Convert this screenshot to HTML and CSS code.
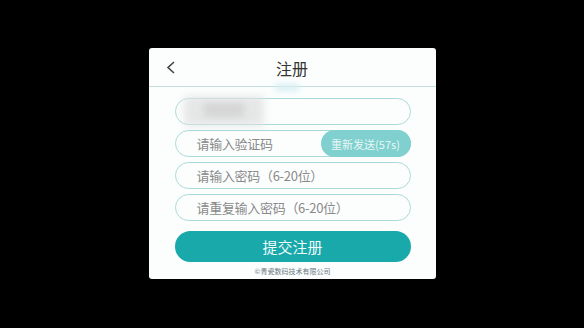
FILE: index.html
```html
<!DOCTYPE html>
<html lang="zh">
<head>
<meta charset="utf-8">
<link rel="stylesheet" href="styles.css">
</head>
<body>
<div class="card">
  <div class="header">
    <svg class="back" width="10" height="13" viewBox="0 0 10 13"><polyline points="8,1 2,6.5 8,12" fill="none" stroke="#444" stroke-width="1.6"/></svg>
    <span class="title">注册</span>
    <span class="smudge"></span>
  </div>
  <div class="form">
    <div class="field phone"><span class="blur"></span><span class="blur b2"></span></div>
    <div class="field"><span class="ph">请输入验证码</span><span class="resend">重新发送(57s)</span></div>
    <div class="field"><span class="ph">请输入密码（6-20位）</span></div>
    <div class="field"><span class="ph">请重复输入密码（6-20位）</span></div>
    <div class="submit">提交注册</div>
    <div class="footer">©青瓷数码技术有限公司</div>
  </div>
</div>
</body>
</html>
```
FILE: styles.css
```css
html, body { margin: 0; padding: 0; }
body {
  background: #000;
  width: 584px;
  height: 328px;
  display: flex;
  align-items: flex-start;
  justify-content: center;
  padding-top: 48px;
  box-sizing: border-box;
  font-family: "Noto Sans CJK SC", "Noto Sans", sans-serif;
}
.card {
  width: 287px;
  height: 231px;
  background: #fcfefe;
  border-radius: 3px;
  display: flex;
  flex-direction: column;
  overflow: hidden;
}
.header {
  position: relative;
  height: 38px;
  border-bottom: 1px solid #c3dedd;
  display: flex;
  align-items: center;
  justify-content: center;
}
.back {
  position: absolute;
  left: 17px;
  top: 13px;
}
.title {
  font-size: 16px;
  color: #333;
  margin-top: 2px;
}
.smudge {
  position: absolute;
  left: 126px;
  top: 36px;
  width: 24px;
  height: 7px;
  background: #d6eef2;
  filter: blur(3px);
}
.form {
  display: flex;
  flex-direction: column;
  padding: 11px 25px 0 26px;
  gap: 5px;
}
.field {
  position: relative;
  height: 25px;
  border: 1px solid #a9d9d7;
  border-radius: 14px;
  display: flex;
  align-items: center;
  padding-left: 21px;
  justify-content: space-between;
}
.ph {
  font-size: 13px;
  color: #8a8a8a;
  letter-spacing: -0.3px;
}
.blur {
  position: absolute;
  left: 8px;
  top: -3px;
  width: 80px;
  height: 30px;
  background: #e2e2e2;
  filter: blur(4px);
  opacity: 0.85;
}
.blur.b2 {
  left: 28px;
  top: 4px;
  width: 40px;
  height: 14px;
  background: #cfcfcf;
  filter: blur(3px);
  opacity: 0.7;
}
.resend {
  align-self: stretch;
  margin: -1px -1px -1px 0;
  width: 90px;
  border-radius: 14px;
  background: #7fd0ce;
  color: #e8f7f6;
  font-size: 11px;
  display: flex;
  align-items: center;
  justify-content: center;
}
.submit {
  margin-top: 5px;
  height: 31px;
  border-radius: 16px;
  background: #1aa9ab;
  color: #eefafa;
  font-size: 15px;
  display: flex;
  align-items: center;
  justify-content: center;
}
.footer {
  margin-top: -1px;
  text-align: center;
  font-size: 7px;
  color: #6a7a80;
}
```
